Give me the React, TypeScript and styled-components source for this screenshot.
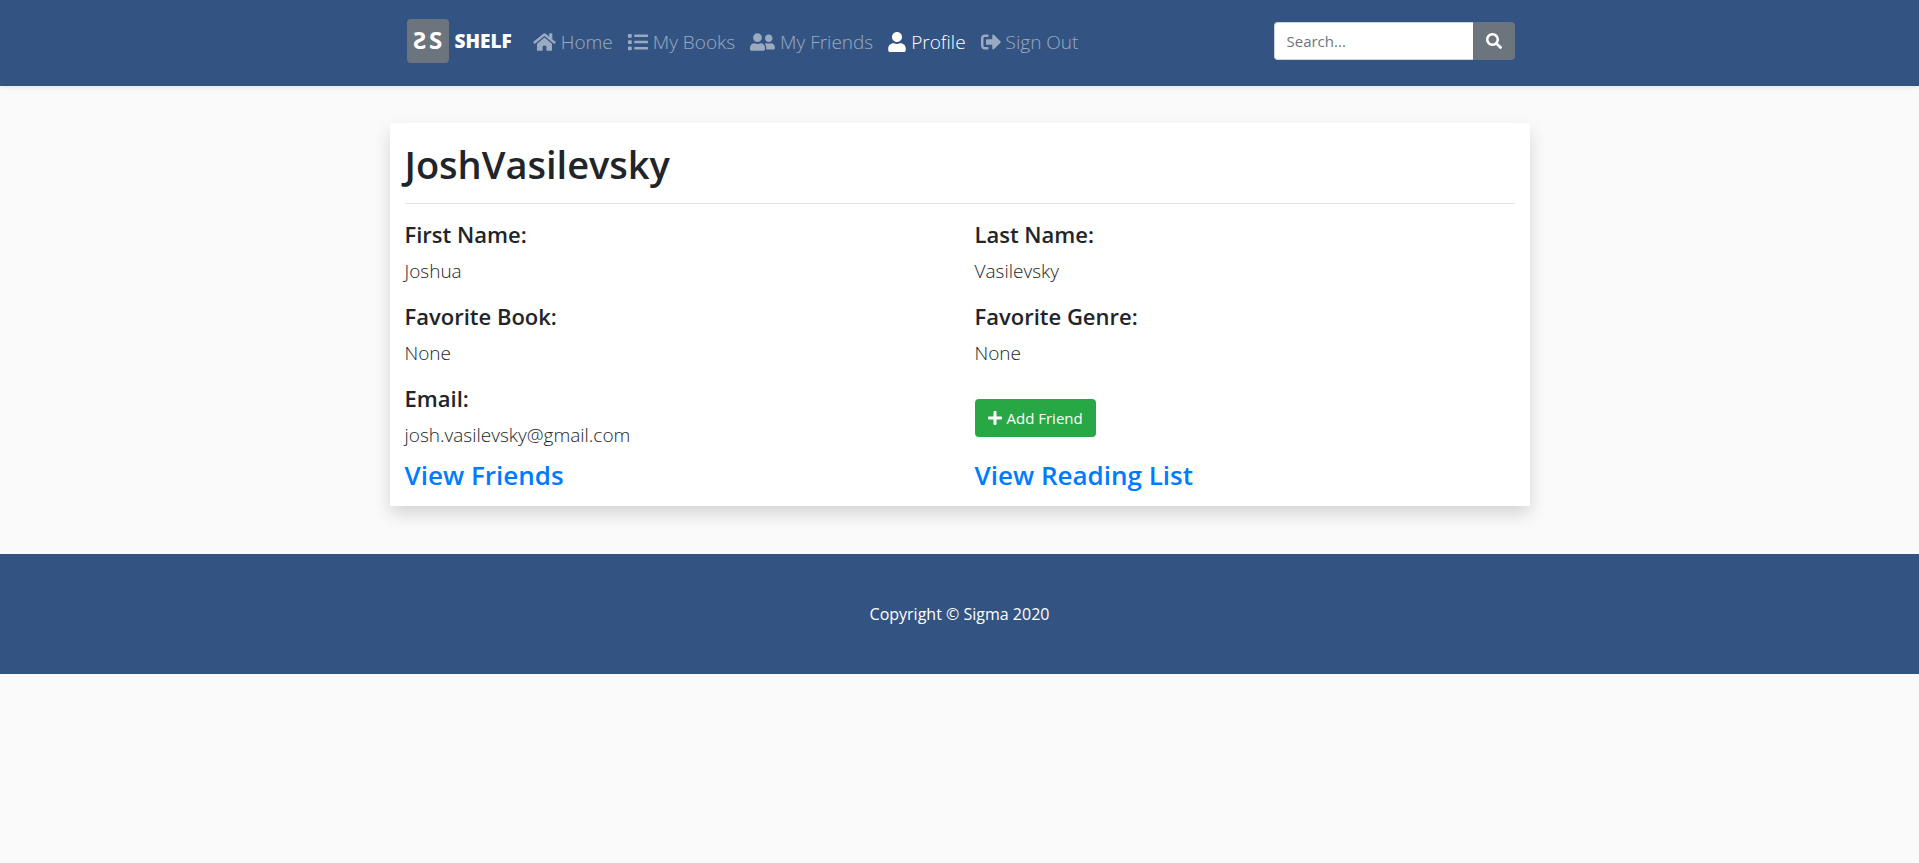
import React from "react";
import styled, { createGlobalStyle } from "styled-components";
import { FaHome, FaList, FaUserFriends, FaUser, FaSignOutAlt, FaSearch, FaPlus } from "react-icons/fa";

const navy = "#335482";

const GlobalStyle = createGlobalStyle`
  *, *::before, *::after { box-sizing: border-box; }
  body {
    margin: 0;
    background: #fafafa;
    color: #212529;
    font-family: "Segoe UI", "Open Sans", "Noto Sans", sans-serif;
    font-size: 15px;
    line-height: 24px;
  }
  h1, h2, h3, p { margin: 0; }
  a { text-decoration: none; }
`;

const Header = styled.header`
  background: ${navy};
  box-shadow: 0 2px 4px rgba(0, 0, 0, 0.075);
  padding: 8px 0;
`;

const Container = styled.div`
  width: 100%;
  max-width: 1140px;
  margin: 0 auto;
  padding: 0 15px;
`;

const Bar = styled(Container)`
  display: flex;
  align-items: center;
  min-height: 70px;
`;

const Brand = styled.a`
  display: flex;
  align-items: center;
  gap: 6px;
  margin: 0 14px 4px 2px;
  color: #fff;
`;

const Badge = styled.span`
  display: flex;
  align-items: center;
  justify-content: center;
  gap: 3px;
  width: 42px;
  height: 44px;
  border-radius: 4px;
  background: #6c757d;
  font-size: 24px;
  font-weight: 700;
  padding-bottom: 2px;
`;

const Mirrored = styled.span`
  transform: scaleX(-1);
`;

const BrandName = styled.span`
  font-size: 19px;
  font-weight: 800;
`;

const Nav = styled.nav`
  display: flex;
  flex: 1;
  padding-bottom: 2px;
`;

const NavLink = styled.a<{ $active?: boolean; $iconWidth: number }>`
  display: flex;
  align-items: center;
  gap: 5px;
  padding: 4px 8px 4px 7px;
  color: ${(p) => (p.$active ? "#fff" : "rgba(255, 255, 255, 0.5)")};
  font-size: 19px;
  font-weight: 300;
  line-height: 30px;
  white-space: nowrap;

  svg {
    flex: none;
    width: ${(p) => p.$iconWidth}px;
    height: 20px;
  }
`;

const Search = styled.form`
  display: flex;
  width: 241px;
  height: 38px;
  margin-bottom: 4px;
`;

const SearchInput = styled.input`
  flex: 1;
  min-width: 0;
  padding: 6px 12px;
  border: 1px solid #ced4da;
  border-right: 0;
  border-radius: 4px 0 0 4px;
  background: #fff;
  color: #495057;
  font: inherit;

  &::placeholder {
    color: #6c757d;
    opacity: 1;
  }
`;

const SearchButton = styled.button`
  display: flex;
  align-items: center;
  justify-content: center;
  width: 42px;
  border: 0;
  border-radius: 0 4px 4px 0;
  background: #6c757d;
  color: #fff;
  font-size: 16px;
`;

const Card = styled.main`
  width: 100%;
  max-width: 1140px;
  margin: 37px auto 48px;
  padding: 17px 15px 14px;
  background: #fff;
  box-shadow: 0 8px 16px rgba(0, 0, 0, 0.15);
`;

const Title = styled.h1`
  padding-bottom: 15px;
  border-bottom: 1px solid #e5e5e5;
  font-size: 38px;
  font-weight: 600;
  line-height: 48px;
`;

const Grid = styled.div`
  display: grid;
  grid-template-columns: 1fr 1fr;
  column-gap: 30px;
`;

const Field = styled.div`
  height: 82px;
  padding-top: 16px;
`;

const Label = styled.h2`
  margin-bottom: 7px;
  font-size: 22px;
  font-weight: 600;
  line-height: 29px;
`;

const Value = styled.p`
  font-size: 19px;
  font-weight: 300;
  line-height: 30px;
`;

const AddButton = styled.button`
  display: flex;
  align-items: center;
  gap: 5px;
  height: 38px;
  margin-top: 15px;
  padding: 0 13px;
  border: 0;
  border-radius: 4px;
  background: #28a745;
  color: #fff;
  font: inherit;

  svg {
    width: 14px;
    height: 16px;
  }
`;

const BigLink = styled.h3`
  padding-top: 8px;
  font-size: 26px;
  font-weight: 600;
  line-height: 34px;

  a { color: #007bff; }
`;

const Footer = styled.footer`
  padding: 48px 0;
  background: ${navy};
  color: #fff;
  font-size: 16px;
  text-align: center;
`;

const links = [
  { label: "Home", Icon: FaHome, iconWidth: 23 },
  { label: "My Books", Icon: FaList, iconWidth: 20 },
  { label: "My Friends", Icon: FaUserFriends, iconWidth: 25 },
  { label: "Profile", Icon: FaUser, iconWidth: 18, active: true },
  { label: "Sign Out", Icon: FaSignOutAlt, iconWidth: 20 },
];

const fields = [
  ["First Name:", "Joshua"],
  ["Last Name:", "Vasilevsky"],
  ["Favorite Book:", "None"],
  ["Favorite Genre:", "None"],
  ["Email:", "josh.vasilevsky@gmail.com"],
];

export default function App() {
  return (
    <>
      <GlobalStyle />
      <Header>
        <Bar>
          <Brand href="#">
            <Badge>
              <Mirrored>S</Mirrored>
              <span>S</span>
            </Badge>
            <BrandName>SHELF</BrandName>
          </Brand>
          <Nav>
            {links.map(({ label, Icon, iconWidth, active }) => (
              <NavLink key={label} href="#" $active={active} $iconWidth={iconWidth}>
                <Icon />
                {label}
              </NavLink>
            ))}
          </Nav>
          <Search onSubmit={(e) => e.preventDefault()}>
            <SearchInput type="search" placeholder="Search..." aria-label="Search" />
            <SearchButton type="submit" aria-label="Submit search">
              <FaSearch />
            </SearchButton>
          </Search>
        </Bar>
      </Header>
      <Card>
        <Title>JoshVasilevsky</Title>
        <Grid>
          {fields.map(([label, value]) => (
            <Field key={label}>
              <Label>{label}</Label>
              <Value>{value}</Value>
            </Field>
          ))}
          <Field>
            <AddButton type="button">
              <FaPlus />
              Add Friend
            </AddButton>
          </Field>
          <BigLink><a href="#">View Friends</a></BigLink>
          <BigLink><a href="#">View Reading List</a></BigLink>
        </Grid>
      </Card>
      <Footer>
        <Container>Copyright © Sigma 2020</Container>
      </Footer>
    </>
  );
}
